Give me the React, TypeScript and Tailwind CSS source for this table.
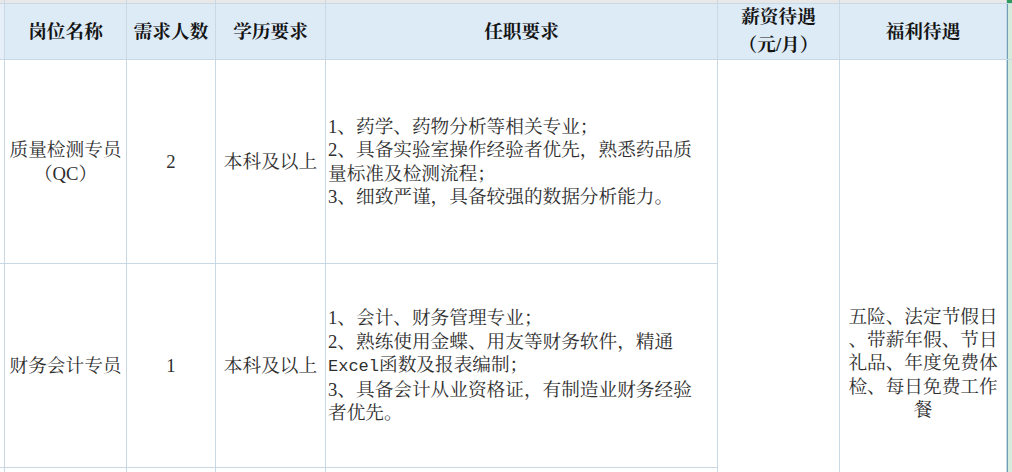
import React from "react";

const font = {
  fontFamily:
    '"Liberation Serif", "Noto Serif CJK SC", "Noto Sans CJK SC", serif',
};

export default function App() {
  const head =
    "bg-[#ddebf7] flex items-center justify-center text-center font-bold text-[18.67px] leading-[28px] text-[#141414]";
  const body =
    "bg-white flex items-center justify-center text-center text-[18.67px] leading-[23.33px] text-[#2e2e2e]";
  const req =
    "bg-white flex items-center justify-start text-left text-[18.67px] leading-[23.33px] text-[#2e2e2e] pl-[2px] whitespace-nowrap";
  const gray = "bg-[#e8e8e8]";
  const green = "bg-[#d4ecdb] border-l border-[#6f9fb4]";

  return (
    <div
      className="w-[1012px] h-[472px] overflow-hidden bg-white"
      style={font}
    >
      <div className="grid grid-cols-[4px_121px_88px_109px_391px_121px_166px_5px] grid-rows-[3px_55px_203px_203px_200px] gap-px bg-[#c9d8e5]">
        {/* top strip */}
        <div className={gray} />
        <div className={gray} />
        <div className={gray} />
        <div className={gray} />
        <div className={gray} />
        <div className={gray} />
        <div className={gray} />
        <div className="bg-[#2e9a5b]" />

        {/* header */}
        <div className="bg-[#e6eef7]" />
        <div className={head}>岗位名称</div>
        <div className={head}>需求人数</div>
        <div className={head}>学历要求</div>
        <div className={head}>任职要求</div>
        <div className={`${head} pb-[2px]`}>
          <span>
            薪资待遇
            <br />
            （元/月）
          </span>
        </div>
        <div className={head}>福利待遇</div>
        <div className={green} />

        {/* row 1 */}
        <div className="bg-white col-start-1 row-start-3" />
        <div className={`${body} col-start-2 row-start-3`}>
          <span>
            质量检测专员
            <br />
            （QC）
          </span>
        </div>
        <div className={`${body} col-start-3 row-start-3`}>2</div>
        <div className={`${body} col-start-4 row-start-3`}>本科及以上</div>
        <div className={`${req} col-start-5 row-start-3`}>
          <span>
            1、药学、药物分析等相关专业；
            <br />
            2、具备实验室操作经验者优先，熟悉药品质
            <br />
            量标准及检测流程；
            <br />
            3、细致严谨，具备较强的数据分析能力。
          </span>
        </div>
        <div className="bg-white col-start-6 row-start-3 row-span-3" />
        <div
          className={`${body} col-start-7 row-start-3 row-span-3 pb-[2px]`}
        >
          <span>
            五险、法定节假日
            <br />
            、带薪年假、节日
            <br />
            礼品、年度免费体
            <br />
            检、每日免费工作
            <br />
            餐
          </span>
        </div>
        <div className={`${green} col-start-8 row-start-3 row-span-3`} />

        {/* row 2 */}
        <div className="bg-white col-start-1 row-start-4" />
        <div className={`${body} col-start-2 row-start-4`}>财务会计专员</div>
        <div className={`${body} col-start-3 row-start-4`}>1</div>
        <div className={`${body} col-start-4 row-start-4`}>本科及以上</div>
        <div className={`${req} col-start-5 row-start-4`}>
          <span>
            1、会计、财务管理专业；
            <br />
            2、熟练使用金蝶、用友等财务软件，精通
            <br />
            <span className="font-['Liberation_Mono'] text-[17px]">Excel</span>
            函数及报表编制；
            <br />
            3、具备会计从业资格证，有制造业财务经验
            <br />
            者优先。
          </span>
        </div>

        {/* row 3 partial */}
        <div className="bg-white col-start-1 row-start-5" />
        <div className="bg-white col-start-2 row-start-5" />
        <div className="bg-white col-start-3 row-start-5" />
        <div className="bg-white col-start-4 row-start-5" />
        <div className="bg-white col-start-5 row-start-5" />
      </div>
    </div>
  );
}
